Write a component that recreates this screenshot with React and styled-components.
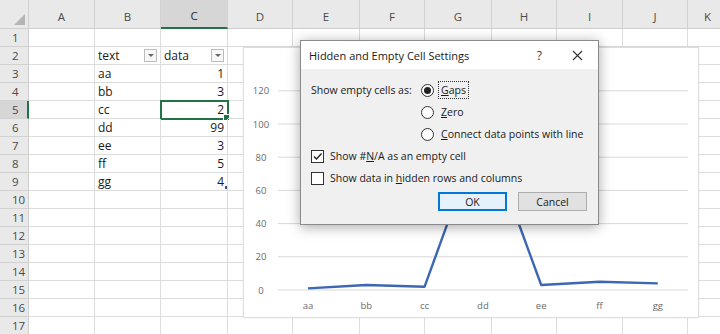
import React from 'react';
import styled, { createGlobalStyle } from 'styled-components';

const GlobalStyle = createGlobalStyle`
	html, body {
		margin: 0;
		padding: 0;
		background: #ffffff;
	}
	body {
		font-family: "Open Sans", "Noto Sans", sans-serif;
	}
`;

const GREEN = '#217346';
const COLS = [29, 66, 66, 67, 65, 67, 65, 67, 65, 66, 65, 40];
const LETTERS = ['A', 'B', 'C', 'D', 'E', 'F', 'G', 'H', 'I', 'J', 'K'];
const ROW_COUNT = 18;

const DATA = [
	['aa', 1],
	['bb', 3],
	['cc', 2],
	['dd', 99],
	['ee', 3],
	['ff', 5],
	['gg', 4],
];

const Sheet = styled.div`
	position: relative;
	width: 720px;
	height: 334px;
	overflow: hidden;
	background: #ffffff;
`;

const Grid = styled.div`
	display: grid;
	grid-template-columns: ${COLS.map((w) => w + 'px').join(' ')};
	grid-template-rows: 29px repeat(${ROW_COUNT}, 18px);
`;

const Corner = styled.div`
	position: relative;
	background: #e9e9e9;
	border-right: 1px solid #cfcfcf;
	border-bottom: 1px solid #cfcfcf;
	box-sizing: border-box;

	&::after {
		content: '';
		position: absolute;
		right: 3px;
		bottom: 3px;
		border-left: 11px solid transparent;
		border-bottom: 11px solid #b4b4b4;
	}
`;

const ColHead = styled.div`
	display: flex;
	align-items: flex-end;
	justify-content: center;
	padding-bottom: 4px;
	box-sizing: border-box;
	background: ${(p) => (p.$active ? '#d6d6d6' : '#e9e9e9')};
	border-right: 1px solid #d2d2d2;
	border-bottom: ${(p) => (p.$active ? `2px solid ${GREEN}` : '1px solid #cfcfcf')};
	color: ${(p) => (p.$active ? '#2a2a2a' : '#4a4a4a')};
	font-size: 11.5px;
`;

const RowHead = styled.div`
	display: flex;
	align-items: center;
	padding-left: 12px;
	box-sizing: border-box;
	background: ${(p) => (p.$active ? '#d6d6d6' : '#e9e9e9')};
	border-bottom: 1px solid #d2d2d2;
	border-right: ${(p) => (p.$active ? `2px solid ${GREEN}` : '1px solid #cfcfcf')};
	color: #4a4a4a;
	font-size: 11.5px;
`;

const Cell = styled.div`
	position: relative;
	display: flex;
	align-items: center;
	justify-content: ${(p) => (p.$right ? 'flex-end' : 'space-between')};
	padding: 0 3px;
	box-sizing: border-box;
	border-right: 1px solid #dcdcdc;
	border-bottom: 1px solid #dcdcdc;
	color: #1a1a1a;
	font-size: 12px;
	white-space: nowrap;
	outline: ${(p) => (p.$selected ? `2px solid ${GREEN}` : 'none')};
	outline-offset: -1px;

	&::after {
		content: '';
		display: ${(p) => (p.$selected ? 'block' : 'none')};
		position: absolute;
		right: -3px;
		bottom: -3px;
		width: 5px;
		height: 5px;
		background: ${GREEN};
		border: 1px solid #ffffff;
	}
`;

const RangeMark = styled.span`
	position: absolute;
	right: 0;
	bottom: 1px;
	width: 2px;
	height: 3px;
	background: #2f4f8f;
`;

const FilterButton = styled.span`
	display: flex;
	align-items: center;
	justify-content: center;
	width: 13px;
	height: 13px;
	box-sizing: border-box;
	border: 1px solid #bdbdbd;
	background: #f7f7f7;

	&::before {
		content: '';
		border-left: 3px solid transparent;
		border-right: 3px solid transparent;
		border-top: 3px solid #666666;
	}
`;

const ChartBox = styled.div`
	position: absolute;
	left: 243px;
	top: 47px;
	width: 456px;
	height: 271px;
	box-sizing: border-box;
	background: #ffffff;
	border: 1px solid #dedede;
	box-shadow: 0 0 2px rgba(0, 0, 0, 0.08);
`;

const AxisText = styled.text`
	font-family: "Open Sans", "Noto Sans", sans-serif;
	font-size: 9.5px;
	fill: #6a6a6a;
`;

const Dialog = styled.div`
	position: absolute;
	left: 300px;
	top: 40px;
	width: 299px;
	height: 185px;
	box-sizing: border-box;
	display: flex;
	flex-direction: column;
	background: #f0f0f0;
	border: 1px solid #8a8a8a;
	box-shadow: 0 2px 12px rgba(0, 0, 0, 0.35);
	font-size: 10.5px;
	color: #1a1a1a;
	white-space: nowrap;
`;

const TitleBar = styled.div`
	display: flex;
	align-items: center;
	justify-content: space-between;
	height: 28px;
	padding: 0 15px 0 8px;
	background: #ffffff;
	font-size: 11px;
`;

const TitleTools = styled.div`
	display: flex;
	align-items: center;
	gap: 30px;
`;

const Help = styled.span`
	font-size: 12px;
	color: #333333;
`;

const Body = styled.div`
	display: flex;
	flex-direction: column;
	padding: 10px 11px 0 10px;
`;

const EmptyRow = styled.div`
	display: flex;
	align-items: flex-start;
`;

const FieldLabel = styled.div`
	width: 110px;
	height: 22px;
	line-height: 22px;
`;

const RadioList = styled.div`
	display: flex;
	flex-direction: column;
`;

const Option = styled.label`
	display: flex;
	align-items: center;
	height: 22px;
	gap: 6px;
`;

const Radio = styled.span`
	display: flex;
	align-items: center;
	justify-content: center;
	flex: none;
	width: 13px;
	height: 13px;
	box-sizing: border-box;
	border-radius: 50%;
	border: 1px solid #333333;
	background: #ffffff;

	&::after {
		content: '';
		display: ${(p) => (p.$checked ? 'block' : 'none')};
		width: 7px;
		height: 7px;
		border-radius: 50%;
		background: #222222;
	}
`;

const OptionText = styled.span`
	padding: 1px 2px;
	margin-left: -2px;
	border: 1px dotted ${(p) => (p.$focused ? '#333333' : 'transparent')};
`;

const CheckRow = styled.label`
	display: flex;
	align-items: center;
	height: 22px;
	gap: 6px;
`;

const Checkbox = styled.span`
	display: flex;
	align-items: center;
	justify-content: center;
	flex: none;
	width: 13px;
	height: 13px;
	box-sizing: border-box;
	border: 1px solid #333333;
	background: #ffffff;
`;

const Buttons = styled.div`
	display: flex;
	justify-content: flex-end;
	gap: 11px;
	margin-top: 3px;
`;

const Button = styled.button`
	width: 69px;
	height: 19px;
	padding: 0;
	box-sizing: border-box;
	font-family: inherit;
	font-size: 10.5px;
	color: #1a1a1a;
	background: ${(p) => (p.$primary ? '#e5f1fb' : '#e1e1e1')};
	border: ${(p) => (p.$primary ? '2px solid #0078d7' : '1px solid #adadad')};
`;

function Chart() {
	const ticks = [0, 20, 40, 60, 80, 100, 120];
	const yOf = (v) => 242 - v * (33.2 / 20);
	const xOf = (i) => 64 + i * 58.3;
	const points = DATA.map(([, v], i) => `${xOf(i)},${yOf(v)}`).join(' ');

	return (
		<ChartBox>
			<svg width="456" height="271" viewBox="0 0 456 271">
				{ticks.map((t) => (
					<g key={t}>
						<line x1="34" x2="444" y1={yOf(t)} y2={yOf(t)} stroke="#d9d9d9" strokeWidth="1" />
						<AxisText x="17" y={yOf(t) + 3.5} textAnchor="middle">{t}</AxisText>
					</g>
				))}
				<polyline points={points} fill="none" stroke="#3d66b4" strokeWidth="2.4" strokeLinejoin="round" />
				{DATA.map(([label], i) => (
					<AxisText key={label} x={xOf(i)} y="261" textAnchor="middle">{label}</AxisText>
				))}
			</svg>
		</ChartBox>
	);
}

function CloseIcon() {
	return (
		<svg width="11" height="11" viewBox="0 0 11 11">
			<path d="M1 1 L10 10 M10 1 L1 10" stroke="#333333" strokeWidth="1.1" fill="none" />
		</svg>
	);
}

function CheckMark() {
	return (
		<svg width="11" height="11" viewBox="0 0 11 11">
			<path d="M2 5.5 L4.5 8 L9.5 2.5" stroke="#222222" strokeWidth="1.3" fill="none" />
		</svg>
	);
}

function SheetGrid() {
	const cells = [];
	cells.push(<Corner key="corner" />);
	LETTERS.forEach((l) => cells.push(<ColHead key={'h' + l} $active={l === 'C'}>{l}</ColHead>));

	for (let r = 1; r <= ROW_COUNT; r++) {
		cells.push(<RowHead key={'r' + r} $active={r === 5}>{r}</RowHead>);
		LETTERS.forEach((l) => {
			const key = l + r;
			const item = DATA[r - 3];
			if (r === 2 && l === 'B') {
				cells.push(<Cell key={key}><span>text</span><FilterButton /></Cell>);
			} else if (r === 2 && l === 'C') {
				cells.push(<Cell key={key}><span>data</span><FilterButton /></Cell>);
			} else if (item && l === 'B') {
				cells.push(<Cell key={key}>{item[0]}</Cell>);
			} else if (item && l === 'C') {
				cells.push(
					<Cell key={key} $right $selected={r === 5}>
						{item[1]}
						{r === 9 && <RangeMark />}
					</Cell>
				);
			} else {
				cells.push(<Cell key={key} />);
			}
		});
	}
	return <Grid>{cells}</Grid>;
}

export default function App() {
	return (
		<>
			<GlobalStyle />
			<Sheet>
				<SheetGrid />
				<Chart />
				<Dialog>
					<TitleBar>
						<span>Hidden and Empty Cell Settings</span>
						<TitleTools>
							<Help>?</Help>
							<CloseIcon />
						</TitleTools>
					</TitleBar>
					<Body>
						<EmptyRow>
							<FieldLabel>Show empty cells as:</FieldLabel>
							<RadioList>
								<Option>
									<Radio $checked />
									<OptionText $focused><u>G</u>aps</OptionText>
								</Option>
								<Option>
									<Radio />
									<OptionText><u>Z</u>ero</OptionText>
								</Option>
								<Option>
									<Radio />
									<OptionText><u>C</u>onnect data points with line</OptionText>
								</Option>
							</RadioList>
						</EmptyRow>
						<CheckRow>
							<Checkbox><CheckMark /></Checkbox>
							<span>Show #<u>N</u>/A as an empty cell</span>
						</CheckRow>
						<CheckRow>
							<Checkbox />
							<span>Show data in <u>h</u>idden rows and columns</span>
						</CheckRow>
						<Buttons>
							<Button $primary>OK</Button>
							<Button>Cancel</Button>
						</Buttons>
					</Body>
				</Dialog>
			</Sheet>
		</>
	);
}
